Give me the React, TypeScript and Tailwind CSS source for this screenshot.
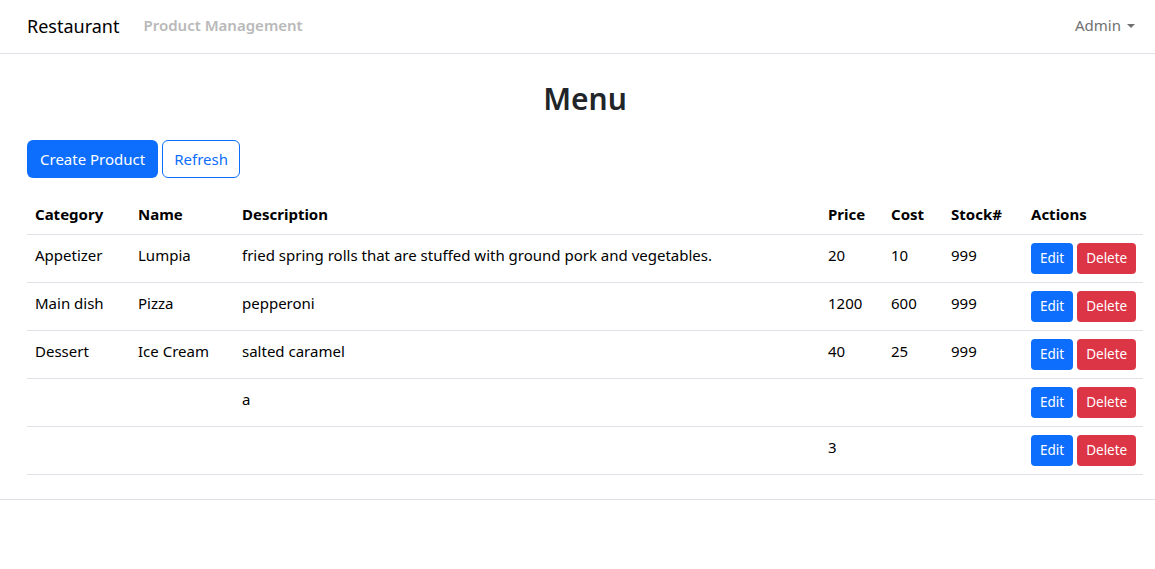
import React from "react";

const rows = [
  { c: "Appetizer", n: "Lumpia", d: "fried spring rolls that are stuffed with ground pork and vegetables.", p: "20", co: "10", s: "999" },
  { c: "Main dish", n: "Pizza", d: "pepperoni", p: "1200", co: "600", s: "999" },
  { c: "Dessert", n: "Ice Cream", d: "salted caramel", p: "40", co: "25", s: "999" },
  { c: "", n: "", d: "a", p: "", co: "", s: "" },
  { c: "", n: "", d: "", p: "3", co: "", s: "" },
];

export default function App() {
  return (
    <div className="min-h-screen bg-white text-[#212529]" style={{ fontFamily: '"Noto Sans", "Open Sans", sans-serif' }}>
      <nav className="h-[54px] border-b border-[#dee2e6] flex items-center pl-[27px] pr-[19px]">
        <span className="text-[18px] text-black mr-[24px] leading-[30px] -mt-[2px]">Restaurant</span>
        <span className="text-[15px] font-semibold text-[#b9b9b9] -mt-[2px]">Product Management</span>
        <div className="ml-auto flex items-center text-[15px] text-[#707070] -mt-[2px]">
          Admin
          <svg width="10" height="6" viewBox="0 0 10 6" className="ml-[5px]"><path d="M1 1 L5 5 L9 1 Z" fill="#707070" /></svg>
        </div>
      </nav>
      <div className="pl-[27px] pr-[12px]">
        <h2 className="text-center text-[30px] font-semibold leading-[38px] mt-[26px] mb-[22px]">Menu</h2>
        <div className="flex gap-[4px] mb-[20px]">
          <button className="h-[38px] px-[13px] rounded-[6px] bg-[#0d6efd] text-white text-[15px]">Create Product</button>
          <button className="h-[38px] px-[11px] rounded-[6px] border border-[#0d6efd] text-[#0d6efd] text-[15px] bg-white">Refresh</button>
        </div>
        <table className="w-full table-fixed border-collapse text-[15px]">
          <colgroup>
            <col className="w-[103px]" />
            <col className="w-[104px]" />
            <col />
            <col className="w-[63px]" />
            <col className="w-[60px]" />
            <col className="w-[80px]" />
            <col className="w-[120px]" />
          </colgroup>
          <thead>
            <tr className="border-b border-[#dee2e6] text-black">
              {["Category", "Name", "Description", "Price", "Cost", "Stock#", "Actions"].map((h) => (
                <th key={h} className="text-left font-bold px-[8px] pt-[6px] pb-[10px] leading-[20px]">{h}</th>
              ))}
            </tr>
          </thead>
          <tbody>
            {rows.map((r, i) => (
              <tr key={i} className="border-b border-[#dee2e6] h-[48px] align-top text-black">
                <td className="px-[8px] pt-[9px]">{r.c}</td>
                <td className="px-[8px] pt-[9px]">{r.n}</td>
                <td className="px-[8px] pt-[9px]">{r.d}</td>
                <td className="px-[8px] pt-[9px]">{r.p}</td>
                <td className="px-[8px] pt-[9px]">{r.co}</td>
                <td className="px-[8px] pt-[9px]">{r.s}</td>
                <td className="px-[8px] pt-[8px]">
                  <div className="flex gap-[4px]">
                    <button className="h-[31px] px-[9px] rounded-[4px] bg-[#0d6efd] text-white text-[13.5px]">Edit</button>
                    <button className="h-[31px] px-[9px] rounded-[4px] bg-[#dc3545] text-white text-[13.5px]">Delete</button>
                  </div>
                </td>
              </tr>
            ))}
          </tbody>
        </table>
      </div>
      <div className="mt-[24px] border-t border-[#dee2e6]" />
    </div>
  );
}
